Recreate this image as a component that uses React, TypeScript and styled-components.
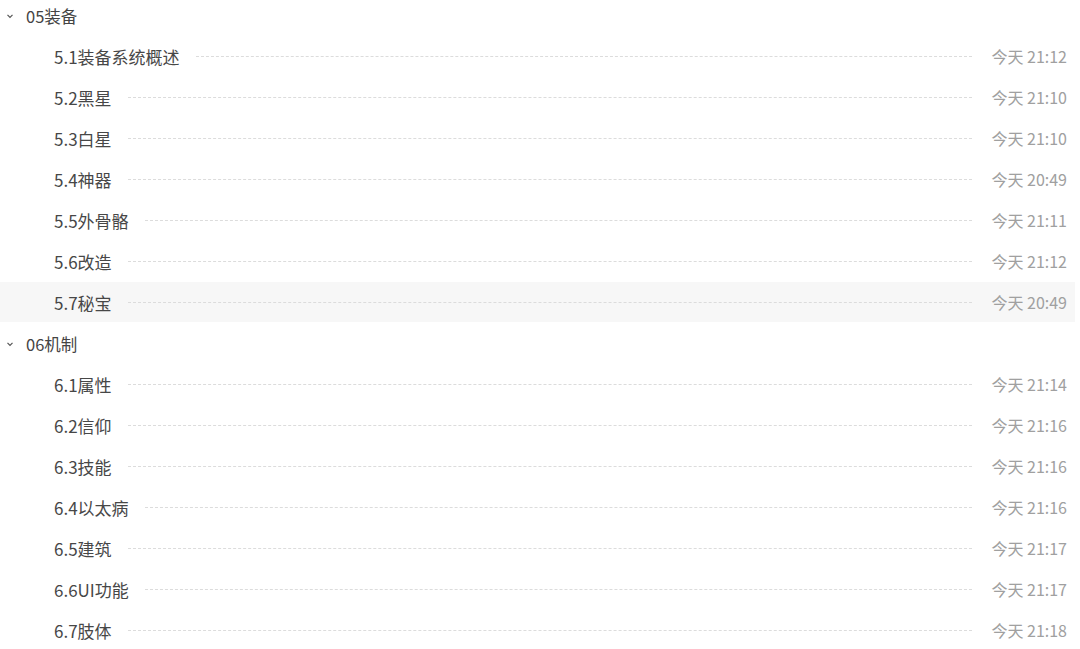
import React from 'react';
import styled, { createGlobalStyle } from 'styled-components';

const GlobalStyle = createGlobalStyle`
  html, body {
    margin: 0;
    padding: 0;
    background: #fff;
  }
  body {
    font-family: "Noto Sans CJK SC", "Noto Sans", sans-serif;
    color: #333;
    overflow: hidden;
  }
`;

const List = styled.div`
  display: flex;
  flex-direction: column;
  margin-top: -5px;
  width: 1075px;
`;

const GroupHeader = styled.div`
  display: flex;
  align-items: center;
  height: 41px;
  padding-left: 5px;
  font-size: 16.5px;
  color: #444;
`;

const Chevron = styled.svg`
  width: 10px;
  height: 10px;
  margin-right: 11px;
  flex: none;
`;

const Row = styled.div<{ $active?: boolean }>`
  display: flex;
  align-items: center;
  height: 40px;
  margin-bottom: 1px;
  padding: 0 8px 0 54px;
  background: ${(p) => (p.$active ? '#f7f7f7' : 'transparent')};
`;

const Title = styled.span`
  font-size: 17px;
  color: #474747;
  white-space: nowrap;
`;

const Leader = styled.span`
  flex: 1;
  height: 0;
  border-top: 1px dashed #dcdcdc;
  margin: 1px 19px 0 16px;
`;

const Time = styled.span`
  font-size: 16px;
  color: #a0a0a0;
  white-space: nowrap;
`;

const groups = [
  {
    name: '05装备',
    items: [
      ['5.1装备系统概述', '今天 21:12'],
      ['5.2黑星', '今天 21:10'],
      ['5.3白星', '今天 21:10'],
      ['5.4神器', '今天 20:49'],
      ['5.5外骨骼', '今天 21:11'],
      ['5.6改造', '今天 21:12'],
      ['5.7秘宝', '今天 20:49'],
    ],
  },
  {
    name: '06机制',
    items: [
      ['6.1属性', '今天 21:14'],
      ['6.2信仰', '今天 21:16'],
      ['6.3技能', '今天 21:16'],
      ['6.4以太病', '今天 21:16'],
      ['6.5建筑', '今天 21:17'],
      ['6.6UI功能', '今天 21:17'],
      ['6.7肢体', '今天 21:18'],
    ],
  },
];

export default function App() {
  return (
    <>
      <GlobalStyle />
      <List>
        {groups.map((g) => (
          <React.Fragment key={g.name}>
            <GroupHeader>
              <Chevron viewBox="0 0 10 10">
                <path d="M2.5 3.8 L5 6.3 L7.5 3.8" fill="none" stroke="#555" strokeWidth="1.2" />
              </Chevron>
              {g.name}
            </GroupHeader>
            {g.items.map(([title, time]) => (
              <Row key={title} $active={title === '5.7秘宝'}>
                <Title>{title}</Title>
                <Leader />
                <Time>{time}</Time>
              </Row>
            ))}
          </React.Fragment>
        ))}
      </List>
    </>
  );
}
